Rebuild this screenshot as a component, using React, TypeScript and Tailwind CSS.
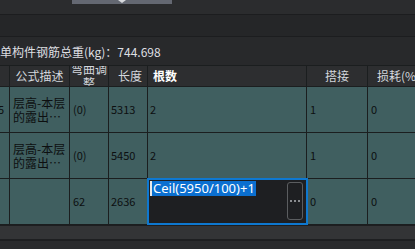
import { useEffect } from 'react';

const cjk = '"Noto Sans CJK SC", "Noto Sans", sans-serif';

type Row = {
    first: string;
    desc: string[];
    bend: string;
    len: string;
    count: string;
    lap: string;
    loss: string;
    editing?: boolean;
};

const rows: Row[] = [
    { first: '5', desc: ['层高-本层', '的露出…'], bend: '(0)', len: '5313', count: '2', lap: '1', loss: '0' },
    { first: '', desc: ['层高-本层', '的露出…'], bend: '(0)', len: '5450', count: '2', lap: '1', loss: '0' },
    { first: '', desc: [], bend: '62', len: '2636', count: '', lap: '0', loss: '0', editing: true },
];

const cols = 'grid grid-cols-[40px_60px_39px_39px_159px_61px_90px]';
const cell = 'border-r border-b border-[#1b1e1f] overflow-hidden';

function Editor() {
    return (
        <div className="absolute -left-[1px] -top-[1px] w-[161px] h-[47px] border-2 border-[#0e78d0] bg-[#1e1f22] flex">
            <div className="grow flex items-start pt-[1px] pl-[1px]">
                <div className="w-[2px] h-[15px] bg-[#e8e8e8]" />
                <span className="h-[15px] leading-[15px] bg-[#0b6fd0] text-white text-[13px] pl-[1px] pr-[1px]"
                    style={{ fontFamily: '"Noto Sans", sans-serif' }}>
                    Ceil(5950/100)+1
                </span>
            </div>
            <div className="w-[16px] h-[38px] mt-[2px] mr-[3px] rounded-[3px] border border-[#5b5d60] flex items-center justify-center gap-[2px]">
                <span className="w-[2px] h-[2px] bg-[#8a8c90]" />
                <span className="w-[2px] h-[2px] bg-[#8a8c90]" />
                <span className="w-[2px] h-[2px] bg-[#8a8c90]" />
            </div>
        </div>
    );
}

function App() {

    useEffect(() => {
        document.body.style.background = '#252628';
    }, []);

    return (
        <div className="w-[415px] h-[249px] overflow-hidden bg-[#252628] flex flex-col" style={{ fontFamily: cjk }}>
            {/* top strip */}
            <div className="h-[4px] flex shrink-0 bg-[#2b2c2e]">
                <div className="w-[72px]" />
                <div className="w-[100px] bg-[#646872] flex justify-center">
                    <div className="w-0 h-0 border-l-[4px] border-r-[4px] border-t-[3px] border-l-transparent border-r-transparent border-t-[#d8dade]" />
                </div>
            </div>
            <div className="h-[11px] shrink-0 bg-[#2b2c2e] border-b border-[#1c1d1f]" />
            <div className="h-[22px] shrink-0 bg-[#252628] border-b border-[#1c1d1f]" />

            {/* title */}
            <div className="h-[28px] shrink-0 bg-[#28292b] flex items-center text-[12px] text-[#dedfe2] whitespace-nowrap pt-[2px]">
                单构件钢筋总重(kg)：744.698
            </div>

            {/* table */}
            <div className="-ml-[30px] w-[488px] shrink-0 border-t border-[#1b1e1f]">
                <div className={`${cols} h-[21px] bg-[#2d2e30] text-[12px] text-[#d3d7dd]`}>
                    <div className={cell} />
                    <div className={`${cell} flex items-center justify-center`}>公式描述</div>
                    <div className={`${cell} flex flex-col items-center justify-center leading-[14px]`}>
                        <span>弯曲调</span>
                        <span>整</span>
                    </div>
                    <div className={`${cell} flex items-center pl-[9px]`}>长度</div>
                    <div className={`${cell} flex items-center pl-[5px] font-bold text-white`}>根数</div>
                    <div className={`${cell} flex items-center justify-center`}>搭接</div>
                    <div className={`${cell} flex items-center pl-[9px] whitespace-nowrap`}>损耗(%)</div>
                </div>
                {rows.map((r, i) => (
                    <div key={i} className={`${cols} h-[46px] bg-[#405f60] text-[12px] text-[#0d0f10]`}>
                        <div className={`${cell} flex items-center pl-[28px] text-[11px]`}>{r.first}</div>
                        <div className={`${cell} flex flex-col justify-center pl-[3px] leading-[14px]`}>
                            {r.desc.map((d) => <span key={d} className="whitespace-nowrap">{d}</span>)}
                        </div>
                        <div className={`${cell} flex items-center pl-[3px] text-[11px]`}>{r.bend}</div>
                        <div className={`${cell} flex items-center pl-[2px] text-[11px]`}>{r.len}</div>
                        <div className={`${cell} relative flex items-center pl-[2px] text-[11px] overflow-visible`}>
                            {r.editing ? <Editor /> : r.count}
                        </div>
                        <div className={`${cell} flex items-center pl-[3px] text-[11px]`}>{r.lap}</div>
                        <div className={`${cell} flex items-center pl-[3px] text-[11px]`}>{r.loss}</div>
                    </div>
                ))}
            </div>

            {/* footer */}
            <div className="h-[1px] shrink-0 bg-[#1d1e20]" />
            <div className="h-[13px] shrink-0 bg-[#333436]" />
            <div className="h-[2px] shrink-0 bg-[#1e1f21]" />
            <div className="grow bg-[#2a2b2d]" />
        </div>
    );
}

export default App;
